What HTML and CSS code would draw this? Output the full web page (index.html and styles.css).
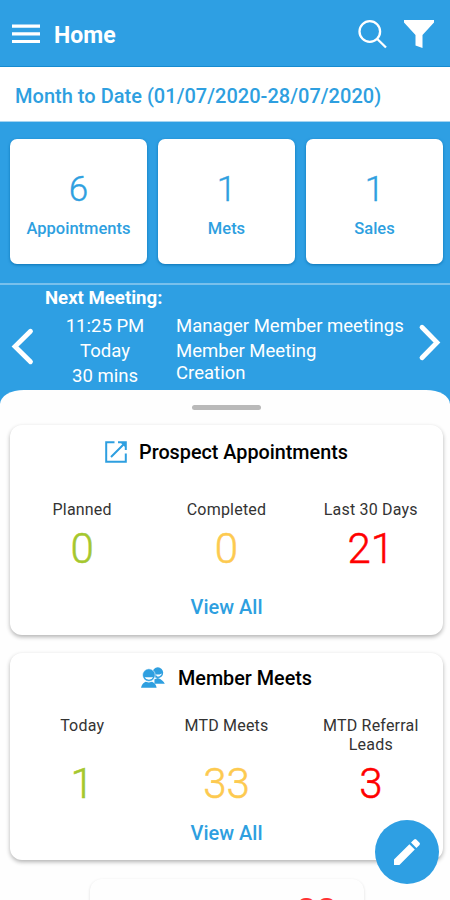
FILE: index.html
```html
<!DOCTYPE html>
<html lang="en">
<head>
<meta charset="utf-8">
<title>Home</title>
<link rel="stylesheet" href="styles.css">
</head>
<body>
<div class="app">
  <header class="topbar">
    <svg class="menu" width="28" height="20" viewBox="0 0 28 20"><path d="M0 2.2H28M0 9.9H28M0 17.5H28" stroke="#fff" stroke-width="3.2"/></svg>
    <h1>Home</h1>
    <svg class="search" width="29" height="29" viewBox="0 0 29 29" fill="none" stroke="#fff" stroke-width="2.3"><circle cx="11.8" cy="11.5" r="10.3"/><path d="M19 18.7L28 27.5"/></svg>
    <svg class="filter" width="30" height="29" viewBox="0 0 30 29"><path d="M0 0H30V2.5L18.5 15V28L11.5 25.5V15L0 2.5Z" fill="#fff"/></svg>
  </header>
  <div class="period">Month to Date (01/07/2020-28/07/2020)</div>
  <section class="stats">
    <div class="stat"><b>6</b><span>Appointments</span></div>
    <div class="stat"><b>1</b><span>Mets</span></div>
    <div class="stat"><b>1</b><span>Sales</span></div>
  </section>
  <section class="next">
    <svg class="prev" width="22" height="37" viewBox="0 0 22 37"><path d="M19.5 3.2L4 18.5L19.5 33.8" fill="none" stroke="#fff" stroke-width="4.8" stroke-linecap="round"/></svg>
    <div class="meeting">
      <h2>Next Meeting:</h2>
      <div class="details">
        <div class="when"><span>11:25 PM</span><span>Today</span><span>30 mins</span></div>
        <div class="what"><span>Manager Member meetings</span><span>Member Meeting</span><span class="last">Creation</span></div>
      </div>
    </div>
    <svg class="forward" width="22" height="37" viewBox="0 0 22 37"><path d="M3 3.2L18 18.5L3 33.8" fill="none" stroke="#fff" stroke-width="4.8" stroke-linecap="round"/></svg>
  </section>
  <main class="sheet">
    <div class="handle"></div>
    <section class="card">
      <h3><svg class="open" width="22" height="22" viewBox="0 0 22 22" fill="none" stroke="#2e9fe0" stroke-width="2"><path d="M9.5 1.2H1.2V20.8H20.8V12.5M13 1.2H20.8V9M20 2L6 16"/><path d="M15.5 1.5H20.5V6.5Z" fill="#2e9fe0" stroke="none"/></svg>Prospect Appointments</h3>
      <div class="metrics">
        <div class="metric green"><span>Planned</span><b>0</b></div>
        <div class="metric amber"><span>Completed</span><b>0</b></div>
        <div class="metric red"><span>Last 30 Days</span><b>21</b></div>
      </div>
      <a class="view">View All</a>
    </section>
    <section class="card members">
      <h3><svg class="people" width="24" height="22" viewBox="0 0 25 22" fill="#2e9fe0"><circle cx="17.5" cy="5.5" r="5.6"/><path d="M14 17V12.3L17.5 11Q23 13 24.8 17H14Z"/><path d="M15 7.4Q19 7.8 21.8 6.2Q20.8 9.4 17 9.4Z" fill="#fff"/><circle cx="8.2" cy="8" r="6.6" stroke="#fff" stroke-width=".6"/><path d="M0 21.2Q1 16.2 4.8 14.8L8.2 15.6L11.5 14.8Q15.5 16.2 16.3 21.2Z"/><path d="M3.8 10.3H12.6Q11.6 12.8 8.3 12.9Q4.9 12.8 3.8 10.3Z" fill="#fff"/></svg>Member Meets</h3>
      <div class="metrics">
        <div class="metric green"><span>Today</span><b>1</b></div>
        <div class="metric amber"><span>MTD Meets</span><b>33</b></div>
        <div class="metric red"><span>MTD Referral<br>Leads</span><b>3</b></div>
      </div>
      <a class="view">View All</a>
    </section>
    <section class="peek"><b>22</b></section>
  </main>
  <div class="fab"><svg width="26" height="26" viewBox="0 0 26 26" fill="#fff"><path d="M0 20.6V26H5.4L20.8 10.6L15.4 5.2ZM25.5 5.9Q26.5 4.8 25.5 3.7L22.3.5Q21.2-.5 20.1.5L17 3.6L22.4 9Z"/></svg></div>
</div>
</body>
</html>
```
FILE: styles.css
```css
* { box-sizing: border-box; }
body { margin: 0; font-family: Roboto, sans-serif; background: #2e9fe3; }
h1, h2, h3 { margin: 0; }
svg { display: block; flex: none; overflow: visible; }
.app { position: relative; width: 450px; height: 900px; overflow: hidden; background: #2e9fe3; color: #fff; }
.topbar { height: 67px; display: flex; align-items: flex-start; padding: 20px 16px 0 12px; border-bottom: 1px solid #168bd0; }
.menu { margin-top: 4px; }
h1 { font-size: 23px; line-height: 30px; font-weight: 700; margin: 1px 0 0 14px; }
.search { margin-left: auto; margin-right: 17px; }
.period { height: 55px; background: #fff; color: #2e9fe0; padding: 1px 15px 0; font-size: 20px; line-height: 56px; font-weight: 500; letter-spacing: .02px; white-space: nowrap; border-bottom: 1px solid #a5d3f0; }
.stats { height: 161px; display: grid; grid-template-columns: repeat(3, 1fr); gap: 11px; padding: 17px 7px 19px 10px; }
.stat { background: #fff; color: #2e9fe0; border-radius: 7px; box-shadow: 0 1px 3px #0d75b5; display: flex; flex-direction: column; align-items: center; padding-top: 30px; }
.stat b { font-size: 35px; line-height: 42px; font-weight: 300; -webkit-text-stroke: .4px currentColor; }
.stat span { font-size: 16.5px; line-height: 20px; font-weight: 500; margin-top: 8px; }
.next { height: 107px; border-top: 2px solid #78c0ec; display: flex; }
.prev { margin: 43px 0 0 11px; }
.forward { margin: 39px 9px 0 auto; }
.meeting { margin-left: 12px; }
h2 { font-size: 18.6px; line-height: 24px; font-weight: 700; margin-top: 1px; }
.details { display: flex; font-size: 18.55px; line-height: 25px; margin-top: 4px; }
.when { width: 120px; text-align: center; }
.what { margin-left: 11px; white-space: nowrap; }
.details span { display: block; }
.what .last { margin-top: -3px; }
.sheet { height: 510px; background: #fefefe; border-radius: 24px 24px 0 0 / 14px 14px 0 0; color: #000; padding: 15px 7px 0 10px; }
.handle { width: 69px; height: 5px; border-radius: 3px; background: #b9b9b9; margin: 0 auto; }
.card { height: 210px; margin-top: 15px; background: #fff; border-radius: 12px; box-shadow: 0 2px 4px rgba(0,0,0,.3); padding-top: 14px; }
.card h3 { display: flex; justify-content: center; align-items: center; height: 26px; font-size: 19.8px; font-weight: 500; gap: 12px; }
.metrics { display: grid; grid-template-columns: repeat(3, 1fr); height: 120px; padding-top: 35px; }
.metric { display: flex; flex-direction: column; align-items: center; text-align: center; }
.metric span { font-size: 16px; line-height: 20px; color: #333; letter-spacing: .2px; }
.metric b { font-size: 42px; line-height: 48px; font-weight: 300; -webkit-text-stroke: .5px currentColor; margin-top: 5px; }
.green b { color: #a5c72e; }
.amber b { color: #fdca50; }
.red b { color: #f00; }
.view { display: block; text-align: center; font-size: 20px; line-height: 24px; font-weight: 500; color: #2e9fe0; margin-top: 10px; }
.members { height: 207px; margin-top: 18px; padding-top: 12px; }
.members h3 { gap: 13px; }
.members .metrics { padding-top: 25px; }
.members .metric span { height: 39px; line-height: 19px; }
.members .metric b { margin-top: 5px; }
.peek { width: 274px; height: 80px; margin: 19px 0 0 80px; border-radius: 12px; box-shadow: 0 1px 3px rgba(0,0,0,.14); padding: 12px 27px 0 0; text-align: right; color: #f33; }
.peek b { font-size: 36px; line-height: 42px; font-weight: 400; }
.fab { position: absolute; left: 375px; top: 820px; width: 64px; height: 64px; border-radius: 50%; background: #2e9fe3; display: flex; align-items: center; justify-content: center; }
```
